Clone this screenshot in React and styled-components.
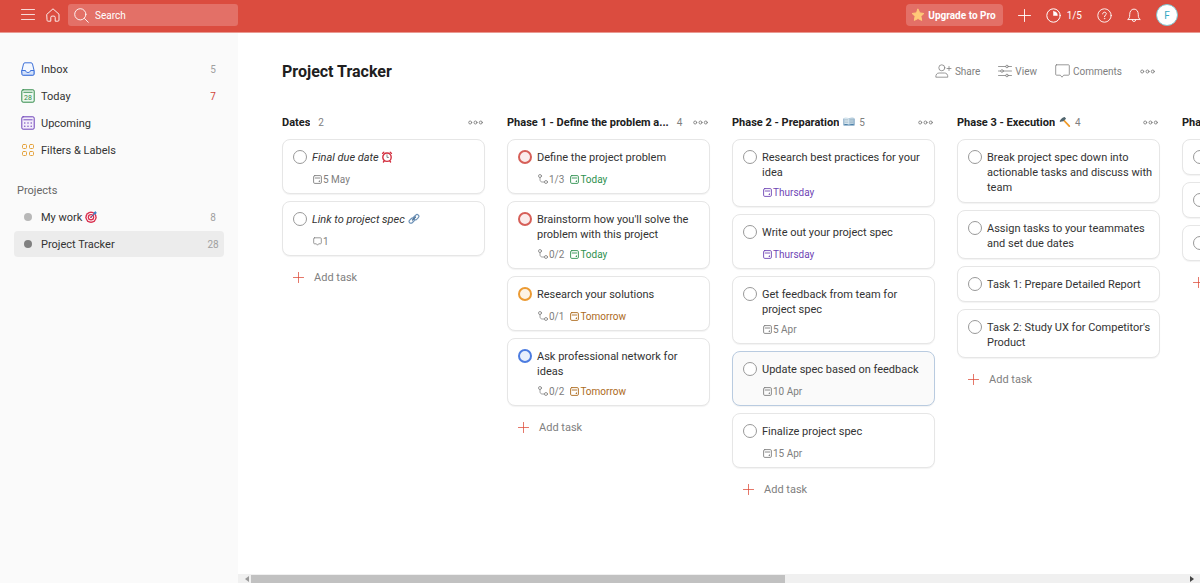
import { useId, useState } from "react";
import styled, { createGlobalStyle, css } from "styled-components";

const projects = [
    { name: "My work", emoji: "target", count: 8, color: "#b8b8b8" },
    { name: "Project Tracker", count: 28, color: "#808080", active: true },
];

const columns = [
    {
        title: "Dates",
        count: 2,
        tasks: [
            { title: "Final due date", italic: true, emoji: "alarm", due: "5 May" },
            { title: "Link to project spec", italic: true, emoji: "link", comments: 1 },
        ],
    },
    {
        title: "Phase 1 - Define the problem a...",
        count: 4,
        tasks: [
            { title: "Define the project problem", priority: 1, subtasks: "1/3", due: "Today", tone: "today" },
            { title: "Brainstorm how you'll solve the problem with this project", priority: 1, subtasks: "0/2", due: "Today", tone: "today" },
            { title: "Research your solutions", priority: 2, subtasks: "0/1", due: "Tomorrow", tone: "tomorrow" },
            { title: "Ask professional network for ideas", priority: 3, subtasks: "0/2", due: "Tomorrow", tone: "tomorrow" },
        ],
    },
    {
        title: "Phase 2 - Preparation",
        emoji: "book",
        count: 5,
        tasks: [
            { title: "Research best practices for your idea", due: "Thursday", tone: "week" },
            { title: "Write out your project spec", due: "Thursday", tone: "week" },
            { title: "Get feedback from team for project spec", due: "5 Apr" },
            { title: "Update spec based on feedback", due: "10 Apr", selected: true },
            { title: "Finalize project spec", due: "15 Apr" },
        ],
    },
    {
        title: "Phase 3 - Execution",
        emoji: "hammer",
        count: 4,
        tasks: [
            { title: "Break project spec down into actionable tasks and discuss with team" },
            { title: "Assign tasks to your teammates and set due dates" },
            { title: "Task 1: Prepare Detailed Report" },
            { title: "Task 2: Study UX for Competitor's Product" },
        ],
    },
    {
        title: "Phase 4",
        tasks: [{ id: 1 }, { id: 2 }, { id: 3 }],
    },
];

const tones = { today: "#2f9150", tomorrow: "#ad6a1c", week: "#6f45b5" };
const priorities = {
    1: { line: "#d65f58", fill: "#fbeceb" },
    2: { line: "#eb9a33", fill: "#fdf3e6" },
    3: { line: "#4c7ce0", fill: "#e9f0fc" },
};

/* icons */
const Svg = ({ w = 16, h = w, box = `0 0 ${w} ${h}`, children, ...rest }) => (
    <svg width={w} height={h} viewBox={box} fill="none" stroke="currentColor" strokeLinecap="round" strokeLinejoin="round" aria-hidden="true" {...rest}>
        {children}
    </svg>
);

const MenuIcon = () => (
    <Svg w={14}><path d="M.5 1.5h13M.5 6.5h13M.5 11.5h13" strokeWidth=".8" /></Svg>
);
const HomeIcon = () => (
    <Svg w={14}><path d="M1 6.2 7 .8l6 5.4v5.900c0 .7-.4 1.100-1.100 1.100H9.200V9.400c0-.8-.5-1.300-1.200-1.300H6c-.7 0-1.200.5-1.200 1.300v3.800H2.100c-.7 0-1.100-.4-1.100-1.100z" strokeWidth=".9" /></Svg>
);
const SearchIcon = () => (
    <Svg w={15}><circle cx="6.300" cy="6.300" r="5.600" strokeWidth=".9" /><path d="m10.500 10.500 3.800 3.800" strokeWidth=".9" /></Svg>
);
const PlusIcon = ({ size = 13 }) => (
    <Svg w={size} box="0 0 13 13"><path d="M6.500.5v12M.5 6.500h12" strokeWidth=".9" /></Svg>
);
const StarIcon = () => (
    <Svg w={14} stroke="#ffc978" fill="#ffc978"><path d="m7 1.200 1.800 3.700 4.100.6-3 2.800.8 4.100L7 10.500l-3.700 1.900.8-4.100-3-2.800 4.100-.6z" /></Svg>
);
const ProgressIcon = () => (
    <Svg w={15}><circle cx="7.500" cy="7.500" r="6.700" /><path d="M7.500 3.600v3.900h3.900a3.900 3.900 0 0 0-3.900-3.900z" fill="currentColor" strokeWidth=".5" /></Svg>
);
const HelpIcon = () => (
    <Svg w={15}>
        <circle cx="7.500" cy="7.500" r="6.700" strokeWidth=".9" />
        <path d="M5.700 5.900c0-1 .8-1.700 1.800-1.700s1.800.7 1.800 1.600c0 1.300-1.800 1.400-1.800 2.800" />
        <circle cx="7.500" cy="10.600" r=".4" fill="currentColor" strokeWidth=".4" />
    </Svg>
);
const BellIcon = () => (
    <Svg w={14} h={16}><path d="M1 12.300c1.200-.9 1.700-1.800 1.700-4.600 0-3.300 1.600-5.600 4.300-5.600s4.300 2.300 4.300 5.600c0 2.800.5 3.700 1.700 4.600zM5.200 12.700a1.800 1.800 0 0 0 3.600 0" strokeWidth=".9" /></Svg>
);
const InboxIcon = () => (
    <Svg w={14} stroke="#3f72d9">
        <path d="M1 8.200 2.500 2c.2-.8.7-1.200 1.500-1.200h6c.8 0 1.300.4 1.500 1.200L13 8.200V12c0 .8-.4 1.200-1.200 1.200H2.200C1.400 13.200 1 12.800 1 12z" fill="#f4f8ff" />
        <path d="M1 8.500h3.500c.2 1.300 1.100 2 2.500 2s2.300-.7 2.500-2H13V12c0 .8-.4 1.200-1.200 1.200H2.200C1.400 13.200 1 12.800 1 12z" fill="#d4e2fb" />
    </Svg>
);
const TodayIcon = () => (
    <Svg w={14} stroke="#2f8a48">
        <rect x=".8" y=".8" width="12.400" height="12.400" rx="1.300" fill="#eef8f0" />
        <path d="M2.800 3.300h8.400" strokeWidth=".9" />
        <text x="7" y="11" textAnchor="middle" fontSize="7" fill="#2f8a48" stroke="none">28</text>
    </Svg>
);
const UpcomingIcon = () => (
    <Svg w={14} stroke="#6d41b8">
        <rect x=".8" y=".8" width="12.400" height="12.400" rx="1.300" fill="#f3edfb" />
        <path d="M2.800 3.800h8.400" strokeWidth=".9" />
        <path d="M3.800 7h.01M7 7h.01M10.200 7h.01M3.800 10.200h.01M7 10.200h.01M10.200 10.200h.01" strokeWidth="1.400" />
    </Svg>
);
const FiltersIcon = () => (
    <Svg w={14} stroke="#e5a23c">
        <rect x="1.500" y="1.500" width="4" height="4" rx="1" />
        <rect x="8.500" y="1.500" width="4" height="4" rx="1" />
        <rect x="1.500" y="8.500" width="4" height="4" rx="1" />
        <rect x="8.500" y="8.500" width="4" height="4" rx="1" />
    </Svg>
);
const ShareIcon = () => (
    <Svg w={17} h={14} strokeWidth=".8">
        <circle cx="6.800" cy="3.800" r="3" />
        <path d="M.8 12.800c0-2.500 1.200-3.800 3.400-3.800h5.200c2.200 0 3.400 1.300 3.400 3.800zM14 2.500v4M12 4.500h4" />
    </Svg>
);
const ViewIcon = () => (
    <Svg w={14} strokeWidth=".8">
        <path d="M.5 2.500h7.200M10.300 2.500h3.200M.5 7h2.200M5.300 7h8.200M.5 11.500h7.200M10.300 11.500h3.200" />
        <circle cx="9" cy="2.500" r="1.300" /><circle cx="4" cy="7" r="1.300" /><circle cx="9" cy="11.500" r="1.300" />
    </Svg>
);
const CommentsIcon = () => (
    <Svg w={15} h={14}><path d="M1.500.8h12c.5 0 .8.300.8.800v8.800c0 .5-.3.800-.8.800H8.700L7 13.200l-1.700-2H1.500c-.5 0-.8-.3-.8-.8V1.600c0-.5.300-.8.800-.8z" strokeWidth=".8" /></Svg>
);
const DotsIcon = () => (
    <Svg w={15} h={5} strokeWidth=".9">
        <circle cx="2.200" cy="2.500" r="1.500" /><circle cx="7.500" cy="2.500" r="1.500" /><circle cx="12.800" cy="2.500" r="1.500" />
    </Svg>
);
const DueIcon = () => (
    <Svg w={9} strokeWidth=".9">
        <rect x=".6" y=".6" width="7.800" height="7.800" rx="1.200" />
        <path d="M2.200 3h4.600" /><circle cx="6.200" cy="6.200" r=".3" />
    </Svg>
);
const SubtaskIcon = () => (
    <Svg w={10} strokeWidth=".8">
        <circle cx="2" cy="2" r="1.500" /><circle cx="8" cy="8" r="1.500" />
        <path d="M2 3.500v2C2 7.200 2.900 8 4.500 8h2" />
    </Svg>
);
const NoteIcon = () => (
    <Svg w={9}><path d="M1.600.8h5.800c.6 0 .9.300.9.900v4.200c0 .6-.3.900-.9.900H5.600L4.500 8.200 3.400 6.800H1.600c-.6 0-.9-.3-.9-.9V1.700c0-.6.300-.9.900-.9z" strokeWidth=".8" /></Svg>
);

const emojis = {
    target: (
        <Svg w={12} stroke="none">
            <circle cx="6" cy="6.200" r="5.700" fill="#d9304f" /><circle cx="6" cy="6.200" r="4.300" fill="#fff" />
            <circle cx="6" cy="6.200" r="3.300" fill="#d9304f" /><circle cx="6" cy="6.200" r="1.900" fill="#fff" />
            <circle cx="6" cy="6.200" r=".9" fill="#d9304f" />
            <path d="m6 6.200 3.300-3.300" stroke="#3b5f9e" /><path d="m8.500 3.600.3-2.200L10.600 0l.3 1.200 1.100.3-1.300 1.700z" fill="#3c83c8" />
        </Svg>
    ),
    alarm: (
        <Svg w={12} stroke="#d32f3f">
            <path d="M1.500 2.400 2.800 1.200M10.500 2.400 9.200 1.200M3.200 10l-.8 1M8.800 10l.8 1" strokeWidth="1.300" />
            <circle cx="6" cy="6.200" r="4.200" fill="#fff" strokeWidth="1.400" />
            <path d="M6 3.800v2.600h1.500" stroke="#555" strokeWidth=".7" />
        </Svg>
    ),
    link: (
        <Svg w={12} stroke="#6e93b8" strokeWidth="1.200">
            <rect x=".8" y="5.800" width="6" height="3.600" rx="1.800" transform="rotate(-45 3.800 7.600)" />
            <rect x="5.200" y="2.400" width="6" height="3.600" rx="1.800" transform="rotate(-45 8.200 4.200)" />
            <path d="m4.500 7 3-3" stroke="#4f7398" />
        </Svg>
    ),
    book: (
        <Svg w={12} h={10} stroke="none">
            <path d="M.5 1.500h11v7H.5z" fill="#4a7fa8" />
            <path d="M1.200.8C3 .2 4.800.5 6 1.500v6.300c-1.300-.7-3-.9-4.800-.4z" fill="#d6e5ee" />
            <path d="M10.800.8C9 .2 7.200.5 6 1.500v6.300c1.300-.7 3-.9 4.800-.4z" fill="#b8cfde" />
            <path d="M2.200 2.500h2.600M2.200 4h2.600M2.200 5.500h2.600M7.200 2.500h2.600M7.200 4h2.600M7.200 5.500h2.600" stroke="#91a9b9" strokeWidth=".4" />
        </Svg>
    ),
    hammer: (
        <Svg w={12} stroke="none">
            <path d="m5 4.500 5.300 5.600" stroke="#f09a28" strokeWidth="1.800" />
            <path d="M.6 5.200C1.800 3 3.200 1.600 5.700 1l1.400 1.700L4 5.600l-1-.4-1.300.9z" fill="#51666f" />
        </Svg>
    ),
};

function Task({ task }) {
    const id = useId();
    const [done, setDone] = useState(false);

    return (
        <Card $selected={task.selected}>
            <TaskRow>
                <Check
                    type="checkbox"
                    id={id}
                    aria-label={task.title ? undefined : "Task"}
                    checked={done}
                    onChange={() => setDone(!done)}
                    $priority={priorities[task.priority]}
                />
                <TaskTitle htmlFor={id} $italic={task.italic}>
                    {task.title} {task.emoji && <Emoji>{emojis[task.emoji]}</Emoji>}
                </TaskTitle>
            </TaskRow>
            {(task.due || task.comments) && (
                <Meta>
                    {task.subtasks && <MetaItem><SubtaskIcon />{task.subtasks}</MetaItem>}
                    {task.due && <MetaItem $tone={tones[task.tone]}><DueIcon />{task.due}</MetaItem>}
                    {task.comments && <MetaItem><NoteIcon />{task.comments}</MetaItem>}
                </Meta>
            )}
        </Card>
    );
}

const App = () => (
    <>
        <GlobalStyle />
        <Page>
            <TopBar>
                <IconButton aria-label="Toggle menu"><MenuIcon /></IconButton>
                <HomeLink href="#home" aria-label="Home"><HomeIcon /></HomeLink>
                <SearchBox>
                    <SearchIcon />
                    <input type="text" placeholder="Search" aria-label="Search" />
                </SearchBox>
                <TopActions>
                    <UpgradeButton><StarIcon />Upgrade to Pro</UpgradeButton>
                    <IconButton aria-label="Quick add"><PlusIcon /></IconButton>
                    <IconButton><ProgressIcon />1/5</IconButton>
                    <IconButton aria-label="Help"><HelpIcon /></IconButton>
                    <IconButton aria-label="Notifications"><BellIcon /></IconButton>
                    <Avatar aria-label="Account">F</Avatar>
                </TopActions>
            </TopBar>

            <Body>
                <Sidebar>
                    <NavList>
                        <li><NavLink href="#inbox"><InboxIcon />Inbox<Count>5</Count></NavLink></li>
                        <li><NavLink href="#today"><TodayIcon />Today<Count $alert>7</Count></NavLink></li>
                        <li><NavLink href="#upcoming"><UpcomingIcon />Upcoming</NavLink></li>
                        <li><NavLink href="#filters"><FiltersIcon />Filters &amp; Labels</NavLink></li>
                    </NavList>
                    <SidebarTitle>Projects</SidebarTitle>
                    <NavList>
                        {projects.map((p) => (
                            <li key={p.name}>
                                <NavLink href="#project" $active={p.active}>
                                    <Dot $color={p.color} />
                                    <span>{p.name} {p.emoji && <Emoji>{emojis[p.emoji]}</Emoji>}</span>
                                    <Count>{p.count}</Count>
                                </NavLink>
                            </li>
                        ))}
                    </NavList>
                </Sidebar>

                <Main>
                    <ProjectHeader>
                        <h1>Project Tracker</h1>
                        <HeaderActions>
                            <TextButton><ShareIcon />Share</TextButton>
                            <TextButton><ViewIcon />View</TextButton>
                            <TextButton><CommentsIcon />Comments</TextButton>
                            <TextButton aria-label="More project actions"><DotsIcon /></TextButton>
                        </HeaderActions>
                    </ProjectHeader>

                    <Board>
                        {columns.map((col) => (
                            <Column key={col.title}>
                                <ColumnHeader>
                                    <h2>{col.title}</h2>
                                    {col.emoji && emojis[col.emoji]}
                                    {col.count && <small>{col.count}</small>}
                                    <DotsButton aria-label="More section actions"><DotsIcon /></DotsButton>
                                </ColumnHeader>
                                {col.tasks.map((task) => <Task key={task.id || task.title} task={task} />)}
                                <AddTask aria-label="Add task"><PlusIcon size={11} />{col.count && "Add task"}</AddTask>
                            </Column>
                        ))}
                    </Board>

                    <ScrollTrack aria-hidden="true">
                        <Arrow $left />
                        <Thumb />
                        <Arrow />
                    </ScrollTrack>
                </Main>
            </Body>
        </Page>
    </>
);

const GlobalStyle = createGlobalStyle`
    * {
        box-sizing: border-box;
    }
    body {
        margin: 0;
        background: #fff;
        color: #333;
        font-family: Roboto, "Open Sans", sans-serif;
        font-size: 11px;
    }
    h1, h2 {
        color: #202020;
    }
    button {
        border: none;
        background: none;
        padding: 0;
        font: inherit;
        color: inherit;
        cursor: pointer;
    }
    a {
        color: inherit;
        text-decoration: none;
    }
    svg {
        flex: none;
    }
`;

const Page = styled.div`
    display: flex;
    flex-direction: column;
    height: 100vh;
    overflow: hidden;
`;

const TopBar = styled.header`
    display: flex;
    align-items: center;
    flex: none;
    height: 33px;
    padding: 0 22px 2px 21px;
    background: #db4c3f;
    border-bottom: 1px solid #ea9a92;
    color: #fff;
`;

const IconButton = styled.button`
    display: flex;
    align-items: center;
    gap: 6px;
    font-size: 10px;
`;

const HomeLink = styled.a`
    display: flex;
    margin: 0 8px 0 11px;
`;

const SearchBox = styled.div`
    display: flex;
    align-items: center;
    gap: 6px;
    width: 170px;
    height: 22px;
    padding: 0 6px;
    border-radius: 3px;
    background: #e37067;

    input {
        flex: 1;
        min-width: 0;
        padding: 0;
        border: none;
        outline: none;
        background: transparent;
        color: #fff;
        font: inherit;
        font-size: 10px;
    }
    input::placeholder {
        color: #fff;
    }
`;

const TopActions = styled.div`
    display: flex;
    align-items: center;
    gap: 15px;
    margin-left: auto;
`;

const UpgradeButton = styled.button`
    display: flex;
    align-items: center;
    gap: 3px;
    height: 22px;
    padding: 0 7px 0 5px;
    border-radius: 4px;
    background: #e37067;
    font-size: 10px;
    font-weight: 700;
`;

const Avatar = styled.button`
    width: 22px;
    height: 22px;
    border: 1px solid #7fc4cf;
    border-radius: 50%;
    background: #fff;
    color: #36a9c4;
    font-size: 10px;
`;

const Body = styled.div`
    display: flex;
    flex: 1;
    min-height: 0;
`;

const Sidebar = styled.nav`
    flex: none;
    width: 238px;
    padding: 23px 14px;
    background: #fafafa;
`;

const NavList = styled.ul`
    display: flex;
    flex-direction: column;
    gap: 1px;
    margin: 0;
    padding: 0;
    list-style: none;
`;

const NavLink = styled.a`
    display: flex;
    align-items: center;
    gap: 6px;
    height: 26px;
    padding-left: 7px;
    border-radius: 4px;
    background: ${({ $active }) => ($active ? "#ececec" : "transparent")};
`;

const Count = styled.span`
    width: 22px;
    margin-left: auto;
    color: ${({ $alert }) => ($alert ? "#d1453b" : "#a0a0a0")};
    font-size: 10px;
    text-align: center;
`;

const SidebarTitle = styled.h2`
    margin: 19px 0 4px 3px;
    color: #666;
    font-size: 11px;
    font-weight: 400;
    line-height: 18px;
`;

const Dot = styled.i`
    width: 8px;
    height: 8px;
    margin: 0 3px;
    border-radius: 50%;
    background: ${({ $color }) => $color};
`;

const Emoji = styled.span`
    display: inline-block;
    height: 12px;
    vertical-align: -2px;

    svg {
        display: block;
    }
`;

const Main = styled.main`
    display: flex;
    flex: 1;
    flex-direction: column;
    min-width: 0;
`;

const ProjectHeader = styled.div`
    display: flex;
    align-items: center;
    justify-content: space-between;
    height: 76px;
    padding: 0 45px 0 44px;

    h1 {
        margin: 0;
        font-size: 16px;
        font-weight: 700;
    }
`;

const HeaderActions = styled.div`
    display: flex;
    gap: 18px;
    color: #808080;
`;

const TextButton = styled.button`
    display: flex;
    align-items: center;
    gap: 3px;
    font-size: 10px;
`;

const Board = styled.div`
    display: flex;
    flex: 1;
    gap: 22px;
    min-height: 0;
    padding-left: 44px;
    overflow: hidden;
`;

const Column = styled.section`
    display: flex;
    flex: none;
    flex-direction: column;
    gap: 7px;
    width: 203px;
`;

const ColumnHeader = styled.div`
    display: flex;
    align-items: center;
    height: 23px;
    padding: 3px 2px 0 0;

    h2 {
        min-width: 0;
        margin: 0 4px 0 0;
        overflow: hidden;
        font-size: 11px;
        font-weight: 700;
        text-overflow: ellipsis;
        white-space: nowrap;
    }
    small {
        margin: 0 5px 0 4px;
        color: #808080;
        font-size: 10px;
    }
`;

const DotsButton = styled.button`
    display: flex;
    margin-left: auto;
    color: #808080;
`;

const Card = styled.article`
    padding: 10px 4px 7px 10px;
    border: 1px solid #e6e6e6;
    border-radius: 8px;
    background: #fff;
    box-shadow: 0 1px 1px rgba(0, 0, 0, 0.05);

    ${({ $selected }) => $selected && css`
        border-color: #b9cbe0;
        background: #fafafa;
    `}
`;

const TaskRow = styled.div`
    display: flex;
    align-items: flex-start;
    gap: 5px;
    min-height: 17px;
`;

const Check = styled.input`
    flex: none;
    width: 14px;
    height: 14px;
    margin: 0;
    border: 1px solid #999;
    border-radius: 50%;
    background: #fff;
    appearance: none;
    cursor: pointer;

    ${({ $priority }) => $priority && css`
        border: 2px solid ${$priority.line};
        background: ${$priority.fill};
    `}
    &:checked {
        background: #999;
    }
`;

const TaskTitle = styled.label`
    line-height: 15px;
    font-style: ${({ $italic }) => ($italic ? "italic" : "normal")};
`;

const Meta = styled.div`
    display: flex;
    gap: 6px;
    padding: 5px 0 0 20px;
`;

const MetaItem = styled.span`
    display: flex;
    align-items: center;
    gap: 1px;
    height: 14px;
    color: ${({ $tone }) => $tone || "#808080"};
    font-size: 10px;
`;

const AddTask = styled.button`
    display: flex;
    align-items: center;
    gap: 10px;
    height: 29px;
    padding-left: 11px;
    color: #808080;

    svg {
        color: #dd4b39;
    }
`;

const ScrollTrack = styled.div`
    display: flex;
    align-items: center;
    flex: none;
    height: 9px;
    padding: 0 4px 0 5px;
    background: #f0f0f0;
`;

const Thumb = styled.div`
    width: 56%;
    height: 8px;
    margin-right: auto;
    background: #c1c1c1;
`;

const Arrow = styled.span`
    margin: 2px;
    border: 3px solid transparent;
    border-width: 3px 0;
    ${({ $left }) => ($left ? "border-right: 4px solid #999;" : "border-left: 4px solid #444;")}
`;

export default App;
